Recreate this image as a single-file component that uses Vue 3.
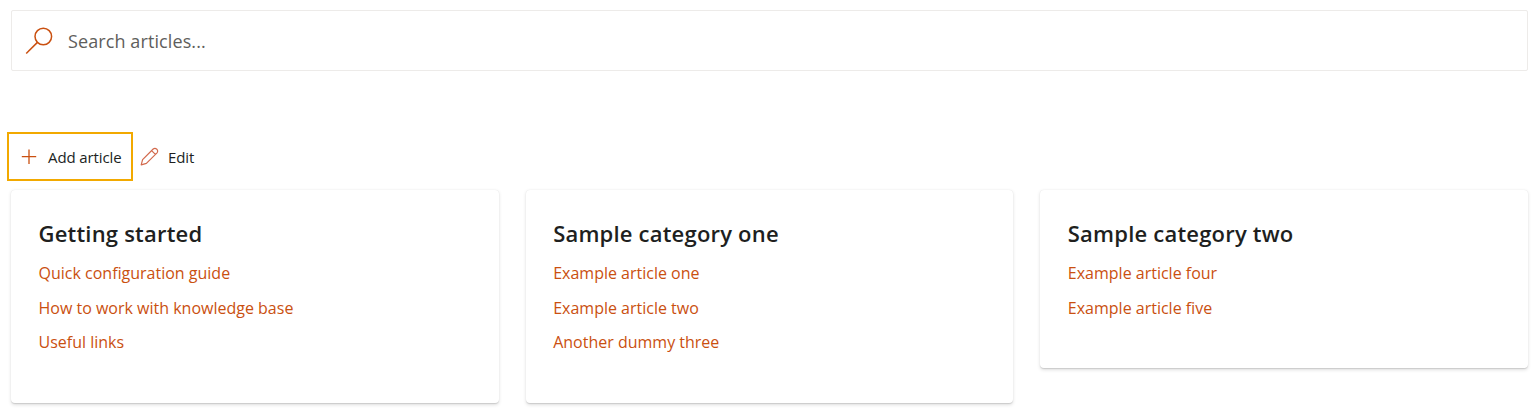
<script setup>
const categories = [
  { title: 'Getting started', links: ['Quick configuration guide', 'How to work with knowledge base', 'Useful links'] },
  { title: 'Sample category one', links: ['Example article one', 'Example article two', 'Another dummy three'] },
  { title: 'Sample category two', links: ['Example article four', 'Example article five'] }
];
</script>

<template>
  <div class="page">
    <div class="search">
      <svg class="search-icon" width="30" height="30" viewBox="0 0 30 30" fill="none">
        <circle cx="19.3" cy="10.5" r="8.3" stroke="#ca5010" stroke-width="1.5" />
        <path d="M13.4 16.4 L2.2 27.5" stroke="#ca5010" stroke-width="1.5" />
      </svg>
      <span class="search-text">Search articles...</span>
    </div>

    <div class="toolbar">
      <button class="tool tool-add">
        <svg width="16" height="16" viewBox="0 0 16 16" fill="none">
          <path d="M8 .5 V15 M.8 7.7 H15.2" stroke="#ca5010" stroke-width="1.3" />
        </svg>
        <span>Add article</span>
      </button>
      <button class="tool tool-edit">
        <svg width="19" height="19" viewBox="0 0 19 19" fill="none">
          <path d="M1.2 17.8 L2.6 12.6 L13.2 2 Q15 .6 16.8 2.2 Q18.4 4 17 5.8 L6.4 16.4 Z M11.6 3.6 L15.4 7.4" stroke="#d2694c" stroke-width="1.2" stroke-linejoin="round" />
        </svg>
        <span>Edit</span>
      </button>
    </div>

    <div class="cards">
      <div v-for="cat in categories" :key="cat.title" class="card">
        <h2 class="card-title">{{ cat.title }}</h2>
        <a v-for="link in cat.links" :key="link" class="card-link" href="#">{{ link }}</a>
      </div>
    </div>
  </div>
</template>

<style scoped>
.page {
  width: 1537px;
  height: 417px;
  padding: 10px 9px 0 11px;
  box-sizing: border-box;
  background: #fff;
  font-family: "Open Sans", "Noto Sans", sans-serif;
  overflow: hidden;
}

.search {
  height: 61px;
  box-sizing: border-box;
  border: 1px solid #edebe9;
  border-radius: 2px;
  display: flex;
  align-items: center;
  padding-left: 12px;
}

.search-icon {
  flex: none;
}

.search-text {
  margin-left: 14px;
  font-size: 18px;
  letter-spacing: 0.1px;
  color: #605e5c;
}

.toolbar {
  display: flex;
  margin-top: 61px;
  margin-left: -4px;
}

.tool {
  height: 49px;
  display: flex;
  align-items: center;
  background: none;
  border: 2px solid transparent;
  font-family: inherit;
  font-size: 15px;
  letter-spacing: -0.1px;
  color: #201f1e;
  padding: 0;
}

.tool-add {
  width: 126px;
  box-sizing: border-box;
  border-color: #f2a900;
  padding-left: 12px;
  gap: 11px;
}

.tool-edit {
  margin-left: 5px;
  gap: 9px;
}

.cards {
  display: grid;
  grid-template-columns: repeat(3, 1fr);
  column-gap: 27px;
  align-items: start;
  margin-top: 9px;
}

.card {
  display: flex;
  flex-direction: column;
  align-items: flex-start;
  box-sizing: border-box;
  padding: 27px 27.5px 38px;
  background: #fff;
  border-radius: 4px;
  box-shadow: 0 1.6px 3.6px rgba(0, 0, 0, 0.13), 0 0.3px 0.9px rgba(0, 0, 0, 0.11);
}

.card-title {
  margin: 0 0 12px;
  font-size: 22px;
  line-height: 32px;
  font-weight: 600;
  letter-spacing: 0.2px;
  color: #201f1e;
}

.card-link {
  font-size: 16px;
  line-height: 24px;
  margin-bottom: 10.5px;
  color: #ca5010;
  text-decoration: none;
}
</style>
